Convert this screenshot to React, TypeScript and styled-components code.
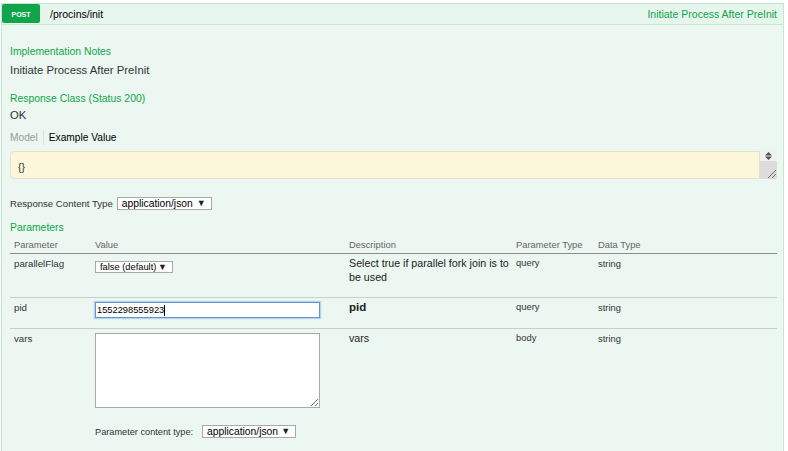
import React from 'react';
import styled, { createGlobalStyle } from 'styled-components';

const GlobalStyle = createGlobalStyle`
  body {
    margin: 0;
    background: #fff;
    font-family: 'Liberation Sans', Arial, sans-serif;
    color: #333;
  }
`;

const COLS = '81px 254px 167px 82px 1fr';

const Page = styled.div`
  padding: 3px 4px 0 1px;
`;

const Heading = styled.div`
  display: flex;
  align-items: center;
  height: 20px;
  border: 1px solid #c3e8d1;
  background: #e7f6ec;
  padding-right: 6px;
`;

const MethodBadge = styled.span`
  display: flex;
  align-items: center;
  justify-content: center;
  align-self: flex-start;
  box-sizing: border-box;
  width: 38px;
  height: 19px;
  padding-top: 2px;
  border-radius: 2px;
  background: #10a54a;
  color: #fff;
  font-size: 7px;
  font-weight: bold;
  text-transform: uppercase;
`;

const Path = styled.span`
  margin-left: 10px;
  font-size: 10.5px;
  color: #000;
`;

const Summary = styled.span`
  margin-left: auto;
  font-size: 10.5px;
  color: #10a54a;
`;

const Content = styled.div`
  display: flow-root;
  border: 1px solid #c3e8d1;
  border-top: none;
  background: #ebf7f0;
  padding: 0 6px 14px 8px;
`;

const SectionTitle = styled.h4<{ $top: number }>`
  margin: ${({ $top }) => $top}px 0 0;
  font-size: 10.4px;
  line-height: 13px;
  font-weight: normal;
  color: #10a54a;
`;

const Text = styled.p<{ $top: number }>`
  margin: ${({ $top }) => $top}px 0 0;
  font-size: 11.3px;
  line-height: 14px;
  color: #333;
`;

const Tabs = styled.div`
  display: flex;
  margin-top: 8px;
  font-size: 10.2px;
  line-height: 15px;
`;

const Tab = styled.span<{ $active?: boolean }>`
  padding: 0 5px;
  color: ${({ $active }) => ($active ? '#000' : '#999')};
  &:first-child {
    padding-left: 0;
    border-right: 1px solid #ddd;
  }
`;

const ExampleBox = styled.div`
  display: flex;
  height: 28px;
  margin-top: 6px;
`;

const ExampleCode = styled.div`
  flex: 1;
  box-sizing: border-box;
  padding: 9px 7px 0;
  border: 1px solid #e5e0c6;
  border-radius: 4px 0 0 4px;
  background: #fcf6db;
  font-size: 10.5px;
  line-height: 12px;
  color: #333;
`;

const ScrollTrack = styled.div`
  display: flex;
  flex-direction: column;
  width: 17px;
`;

const ScrollButton = styled.div`
  display: flex;
  align-items: center;
  justify-content: center;
  height: 10px;
  background: #f1f1f1;
`;

const ResizeGrip = styled.div`
  display: flex;
  align-items: flex-end;
  justify-content: flex-end;
  flex: 1;
  background: #dcdcdc;
`;

const InlineField = styled.div<{ $top: number; $size: number; $gap: number }>`
  display: flex;
  align-items: center;
  gap: ${({ $gap }) => $gap}px;
  margin-top: ${({ $top }) => $top}px;
  font-size: ${({ $size }) => $size}px;
  color: #333;
`;

const FakeSelect = styled.div<{ $w: number; $h: number; $size: number; $top?: number }>`
  display: flex;
  align-items: center;
  justify-content: space-between;
  box-sizing: border-box;
  width: ${({ $w }) => $w}px;
  height: ${({ $h }) => $h}px;
  margin-top: ${({ $top = 0 }) => $top}px;
  padding: 0 5px 0 4px;
  border: 1px solid #a9a9a9;
  background: #fff;
  font-size: ${({ $size }) => $size}px;
  color: #000;
`;

const Arrow = styled.span`
  font-size: 9px;
  line-height: 1;
  color: #222;
`;

const HeadRow = styled.div`
  display: grid;
  grid-template-columns: ${COLS};
  margin-top: 5px;
  border-bottom: 1px solid #8c8c8c;
`;

const HeadCell = styled.span`
  padding: 0 4px 2px;
  font-size: 9.4px;
  line-height: 12px;
  color: #666;
`;

const ParamRow = styled.div`
  display: grid;
  grid-template-columns: ${COLS};
  align-items: start;
  padding: 2px 0 10px;
  border-bottom: 1px solid #ccc;
  &:last-child {
    border-bottom: none;
  }
`;

const Cell = styled.div<{ $size: number; $pt?: number; $lh?: number; $color?: string }>`
  padding: ${({ $pt = 0 }) => $pt}px 4px 0;
  font-size: ${({ $size }) => $size}px;
  line-height: ${({ $lh = 12 }) => $lh}px;
  color: ${({ $color = '#333' }) => $color};
`;

const DescCell = styled(Cell)`
  padding-right: 0;
  padding-bottom: 3px;
  strong {
    font-size: 11.5px;
  }
`;

const ValueCell = styled.div`
  display: flex;
  flex-direction: column;
  align-items: flex-start;
  padding: 0 4px;
`;

const PidInput = styled.div`
  display: flex;
  align-items: center;
  box-sizing: border-box;
  width: 225px;
  height: 16px;
  margin-top: 2px;
  padding-left: 1px;
  border: 1px solid #5f95d8;
  box-shadow: 0 0 1px 1px rgba(95, 149, 216, 0.35);
  background: #fff;
  font-size: 9.3px;
  color: #000;
`;

const Caret = styled.span`
  width: 1px;
  height: 11px;
  background: #000;
`;

const VarsArea = styled.textarea`
  display: block;
  box-sizing: border-box;
  width: 225px;
  height: 75px;
  margin: 2px 0 0;
  border: 1px solid #a9a9a9;
  background: #fff;
  resize: both;
  outline: none;
`;

type Param = {
  name: string;
  description: React.ReactNode;
  paramType: string;
  dataType: string;
  value: React.ReactNode;
};

const params: Param[] = [
  {
    name: 'parallelFlag',
    description: 'Select true if parallel fork join is to be used',
    paramType: 'query',
    dataType: 'string',
    value: (
      <FakeSelect $w={78} $h={12} $size={9.3} $top={5}>
        false (default) <Arrow>▼</Arrow>
      </FakeSelect>
    ),
  },
  {
    name: 'pid',
    description: <strong>pid</strong>,
    paramType: 'query',
    dataType: 'string',
    value: (
      <PidInput>
        1552298555923
        <Caret />
      </PidInput>
    ),
  },
  {
    name: 'vars',
    description: 'vars',
    paramType: 'body',
    dataType: 'string',
    value: (
      <>
        <VarsArea />
        <InlineField $top={17} $size={9.2} $gap={9}>
          Parameter content type:
          <FakeSelect $w={94} $h={13} $size={10.3}>
            application/json <Arrow>▼</Arrow>
          </FakeSelect>
        </InlineField>
      </>
    ),
  },
];

export default function App() {
  return (
    <Page>
      <GlobalStyle />
      <Heading>
        <MethodBadge>Post</MethodBadge>
        <Path>/procins/init</Path>
        <Summary>Initiate Process After PreInit</Summary>
      </Heading>

      <Content>
        <SectionTitle $top={20}>Implementation Notes</SectionTitle>
        <Text $top={5}>Initiate Process After PreInit</Text>

        <SectionTitle $top={15}>Response Class (Status 200)</SectionTitle>
        <Text $top={3}>OK</Text>

        <Tabs>
          <Tab>Model</Tab>
          <Tab $active>Example Value</Tab>
        </Tabs>

        <ExampleBox>
          <ExampleCode>{'{}'}</ExampleCode>
          <ScrollTrack>
            <ScrollButton>
              <svg width="7" height="8" viewBox="0 0 7 8">
                <polygon points="3.5,0 7,3.5 0,3.5" fill="#505050" />
                <polygon points="0,4.5 7,4.5 3.5,8" fill="#505050" />
              </svg>
            </ScrollButton>
            <ResizeGrip>
              <svg width="11" height="11" viewBox="0 0 11 11">
                <line x1="2" y1="10" x2="10" y2="2" stroke="#6b6b6b" strokeWidth="1" />
                <line x1="6" y1="10" x2="10" y2="6" stroke="#6b6b6b" strokeWidth="1" />
              </svg>
            </ResizeGrip>
          </ScrollTrack>
        </ExampleBox>

        <InlineField $top={18} $size={9.6} $gap={4}>
          Response Content Type
          <FakeSelect $w={95} $h={13} $size={10.3}>
            application/json <Arrow>▼</Arrow>
          </FakeSelect>
        </InlineField>

        <SectionTitle $top={11}>Parameters</SectionTitle>

        <HeadRow>
          <HeadCell>Parameter</HeadCell>
          <HeadCell>Value</HeadCell>
          <HeadCell>Description</HeadCell>
          <HeadCell>Parameter Type</HeadCell>
          <HeadCell>Data Type</HeadCell>
        </HeadRow>

        <div>
          {params.map((p) => (
            <ParamRow key={p.name}>
              <Cell $size={9.7} $pt={2}>
                {p.name}
              </Cell>
              <ValueCell>{p.value}</ValueCell>
              <DescCell $size={10.7} $lh={14} $color="#222">
                {p.description}
              </DescCell>
              <Cell $size={9.4} $pt={1}>
                {p.paramType}
              </Cell>
              <Cell $size={9.4} $pt={2}>
                {p.dataType}
              </Cell>
            </ParamRow>
          ))}
        </div>
      </Content>
    </Page>
  );
}
